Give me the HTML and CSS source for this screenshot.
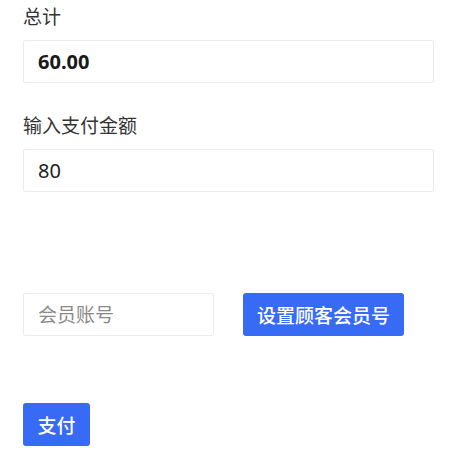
FILE: index.html
```html
<!DOCTYPE html>
<html lang="zh-CN">
<head>
<meta charset="utf-8">
<link rel="stylesheet" href="styles.css">
</head>
<body>
<div class="page">
  <label class="label label-first">总计</label>
  <input class="field field-total" type="text" value="60.00" readonly>
  <label class="label label-second">输入支付金额</label>
  <input class="field" type="text" value="80">
  <div class="member-row">
    <input class="field field-member" type="text" placeholder="会员账号">
    <button class="btn btn-member" type="button">设置顾客会员号</button>
  </div>
  <button class="btn btn-pay" type="button">支付</button>
</div>
</body>
</html>
```
FILE: styles.css
```css
html, body {
  margin: 0;
  padding: 0;
  background: #ffffff;
}
body {
  font-family: "Noto Sans", "Noto Sans CJK SC", sans-serif;
  color: #222222;
}
.page {
  display: flex;
  flex-direction: column;
  align-items: flex-start;
  padding: 5px 0 0 23px;
}
.label {
  font-size: 19px;
  line-height: 24px;
  color: #333333;
}
.label-second {
  margin-top: 31px;
}
.field {
  box-sizing: border-box;
  width: 411px;
  height: 43px;
  margin: 11px 0 0 0;
  padding: 0 14px;
  border: 1px solid #ececec;
  border-radius: 2px;
  font-family: "Noto Sans", "Noto Sans CJK SC", sans-serif;
  font-size: 20px;
  color: #222222;
  background: #ffffff;
  outline: none;
}
.field-total {
  font-weight: 700;
  color: #1a1a1a;
}
.field::placeholder {
  color: #8a8a8a;
}
.field-member {
  width: 191px;
  margin: 0;
  font-size: 19px;
}
.member-row {
  display: flex;
  gap: 29px;
  margin-top: 101px;
}
.btn {
  box-sizing: border-box;
  height: 43px;
  padding: 0;
  border: none;
  border-radius: 3px;
  background: #376bf6;
  color: #ffffff;
  font-family: "Noto Sans", "Noto Sans CJK SC", sans-serif;
  font-size: 19px;
  font-weight: 500;
  white-space: nowrap;
  text-align: center;
  cursor: pointer;
}
.btn-member {
  width: 161px;
}
.btn-pay {
  width: 67px;
  margin-top: 67px;
}
```
